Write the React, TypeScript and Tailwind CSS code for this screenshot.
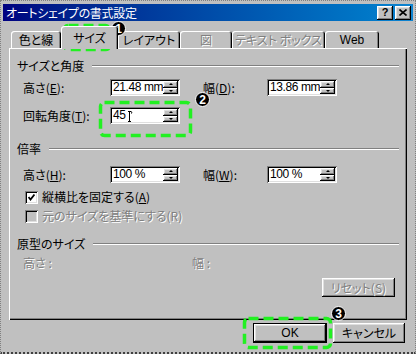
import React from "react";

const jp =
  "font-['MS_UI_Gothic','Noto_Sans_CJK_JP','Noto_Sans',sans-serif] [font-feature-settings:'palt']";
const num = "font-['Liberation_Sans','Noto_Sans_CJK_JP',sans-serif]";
const raised =
  "shadow-[inset_-1px_-1px_0_#000,inset_1px_1px_0_#fff,inset_-2px_-2px_0_#808080,inset_2px_2px_0_#dfdfdf]";
const sunken =
  "shadow-[inset_1px_1px_0_#808080,inset_-1px_-1px_0_#fff,inset_2px_2px_0_#000,inset_-2px_-2px_0_#dfdfdf]";
const off = "text-[#808080] [text-shadow:1px_1px_0_#fff]";

const tabs = [
  { label: "色と線", cls: "w-[50px] h-[17px]" },
  { label: "サイズ", cls: "w-[57px] h-[23px] -mb-[1px] relative z-10", active: true },
  { label: "レイアウト", cls: "w-[62px] h-[17px]" },
  { label: "図", cls: "w-[52px] h-[17px]", disabled: true },
  { label: "テキスト ボックス", cls: "w-[93px] h-[17px]", disabled: true },
  { label: "Web", cls: "w-[54px] h-[17px]" },
];

function SpinInput({ value, cursor }: { value: string; cursor?: boolean }) {
  return (
    <div className={`w-[70px] h-[17px] bg-white p-[2px] flex ${sunken}`}>
      <span
        className={`flex-1 min-w-0 flex items-center whitespace-nowrap overflow-hidden text-[12px] leading-[13px] tracking-[-0.4px] pl-[1px] ${num}`}
      >
        {value}
        {cursor && (
          <svg width="6" height="12" viewBox="0 0 6 12" className="ml-[1px] shrink-0">
            <path d="M1 1.5h3M2.5 1.5v10M1 11.5h3M4 1.5c1 0 1 2 0 2" stroke="#000" fill="none" strokeWidth="1" />
          </svg>
        )}
      </span>
      <div className="flex flex-col w-[15px] shrink-0 h-full">
        <div className={`flex-1 bg-[#c0c0c0] flex items-center justify-center ${raised}`}>
          <div className="w-0 h-0 border-x-[2px] border-x-transparent border-b-[2px] border-b-black" />
        </div>
        <div className={`flex-1 bg-[#c0c0c0] flex items-center justify-center ${raised}`}>
          <div className="w-0 h-0 border-x-[2px] border-x-transparent border-t-[2px] border-t-black" />
        </div>
      </div>
    </div>
  );
}

function Group({ title }: { title: string }) {
  return (
    <div className="flex items-center h-[14px]">
      <span className="text-[12px] leading-[14px]">{title}</span>
      <div className="flex-1 ml-[8px] h-[2px] border-t border-t-[#808080] border-b border-b-white" />
    </div>
  );
}

function Badge({ n, cls }: { n: string; cls: string }) {
  return (
    <div
      className={`absolute w-[15px] h-[15px] rounded-full bg-black border border-white flex items-center justify-center text-white text-[12px] font-bold leading-none ${num} ${cls}`}
    >
      {n}
    </div>
  );
}

export default function App() {
  return (
    <div className={`relative w-[416px] h-[354px] bg-[#c0c0c0] border border-dotted border-[#808080] border-b-[#404040] border-b-2 text-black ${jp}`}>
      {/* title bar */}
      <div className="mx-[2px] mt-[3px] h-[17px] flex items-center justify-between bg-gradient-to-r from-[#000080] to-[#1084d0] pl-[3px] pr-[2px]">
        <span className="text-white text-[12px] leading-[14px] tracking-[-0.3px]">オートシェイプの書式設定</span>
        <div className="flex gap-[2px]">
          <div className={`w-[16px] h-[14px] bg-[#c0c0c0] flex items-center justify-center text-[11px] font-bold leading-none ${num} ${raised}`}>
            ?
          </div>
          <div className={`w-[16px] h-[14px] bg-[#c0c0c0] flex items-center justify-center ${raised}`}>
            <svg width="8" height="7" viewBox="0 0 8 7">
              <path d="M0.5 0.5l7 6M7.5 0.5l-7 6" stroke="#000" strokeWidth="1.6" />
            </svg>
          </div>
        </div>
      </div>

      {/* tabs */}
      <div className="h-[27px] pl-[10px] flex items-end">
        {tabs.map((t) => (
          <div
            key={t.label}
            className={`${t.cls} bg-[#c0c0c0] rounded-t-[3px] flex items-center justify-center text-[12px] leading-[14px] shadow-[inset_1px_1px_0_#fff,inset_-1px_0_0_#000,inset_-2px_0_0_#808080] ${t.disabled ? off : ""}`}
          >
            <span className={t.label === "Web" ? num : ""}>{t.label}</span>
          </div>
        ))}
      </div>

      {/* panel */}
      <div className="ml-[8px] w-[398px] h-[272px] pt-[11px] px-[8px] flex flex-col text-[12px] leading-[14px] shadow-[inset_1px_1px_0_#fff,inset_-1px_-1px_0_#000,inset_-2px_-2px_0_#808080]">
        <Group title="サイズと角度" />
        <div className="flex items-center h-[17px] mt-[6px]">
          <span className="w-[93px] pl-[6px]">
            高さ(<span className="underline">E</span>):
          </span>
          <SpinInput value="21.48 mm" />
          <span className="w-[87px] pl-[23px]">
            幅(<span className="underline">D</span>):
          </span>
          <SpinInput value="13.86 mm" />
        </div>
        <div className="flex items-center h-[17px] mt-[11px]">
          <span className="w-[93px] pl-[6px]">
            回転角度(<span className="underline">T</span>):
          </span>
          <SpinInput value="45" cursor />
        </div>

        <div className="mt-[18px]">
          <Group title="倍率" />
        </div>
        <div className="flex items-center h-[17px] mt-[10px]">
          <span className="w-[93px] pl-[6px]">
            高さ(<span className="underline">H</span>):
          </span>
          <SpinInput value="100 %" />
          <span className="w-[87px] pl-[23px]">
            幅(<span className="underline">W</span>):
          </span>
          <SpinInput value="100 %" />
        </div>
        <div className="flex items-center h-[14px] mt-[7px] pl-[8px]">
          <div className={`w-[13px] h-[13px] bg-white flex items-center justify-center ${sunken}`}>
            <svg width="7" height="7" viewBox="0 0 7 7">
              <path d="M0.5 3l2 2.5 4-5" stroke="#000" strokeWidth="1.8" fill="none" />
            </svg>
          </div>
          <span className="ml-[4px]">
            縦横比を固定する(<span className="underline">A</span>)
          </span>
        </div>
        <div className="flex items-center h-[14px] mt-[5px] pl-[8px]">
          <div className={`w-[13px] h-[13px] bg-[#c0c0c0] ${sunken}`} />
          <span className={`ml-[4px] ${off}`}>元のサイズを基準にする(R)</span>
        </div>

        <div className="mt-[14px]">
          <Group title="原型のサイズ" />
        </div>
        <div className={`flex items-center h-[14px] mt-[5px] ${off}`}>
          <span className="w-[175px] pl-[6px]">高さ :</span>
          <span>幅 :</span>
        </div>
        <div className="flex justify-end mt-[8px] pr-[4px]">
          <div className={`w-[73px] h-[19px] bg-[#c0c0c0] flex items-center justify-center ${raised} ${off}`}>
            リセット(S)
          </div>
        </div>
      </div>

      {/* dialog buttons */}
      <div className="mt-[3px] flex justify-end gap-[6px] pr-[10px] text-[12px] leading-[14px]">
        <div className="w-[74px] h-[20px] border border-black">
          <div className={`w-full h-full bg-[#c0c0c0] flex items-center justify-center ${raised}`}>
            <span className={num}>OK</span>
          </div>
        </div>
        <div className={`w-[72px] h-[20px] bg-[#c0c0c0] flex items-center justify-center ${raised}`}>
          キャンセル
        </div>
      </div>

      {/* annotations */}
      <svg className="absolute -left-[1px] -top-[1px] pointer-events-none" width="416" height="354" viewBox="0 0 416 354">
        <g fill="none" stroke="#22f022" strokeWidth="3.5" strokeDasharray="10 5">
          <rect x="64.5" y="25.5" width="45" height="24" rx="4" />
          <rect x="100.5" y="102.5" width="90" height="33" rx="4" />
          <rect x="244.5" y="318.5" width="86" height="29" rx="4" />
        </g>
      </svg>
      <Badge n="1" cls="left-[110px] top-[20px]" />
      <Badge n="2" cls="left-[194px] top-[91px]" />
      <Badge n="3" cls="left-[330px] top-[305px]" />
    </div>
  );
}
